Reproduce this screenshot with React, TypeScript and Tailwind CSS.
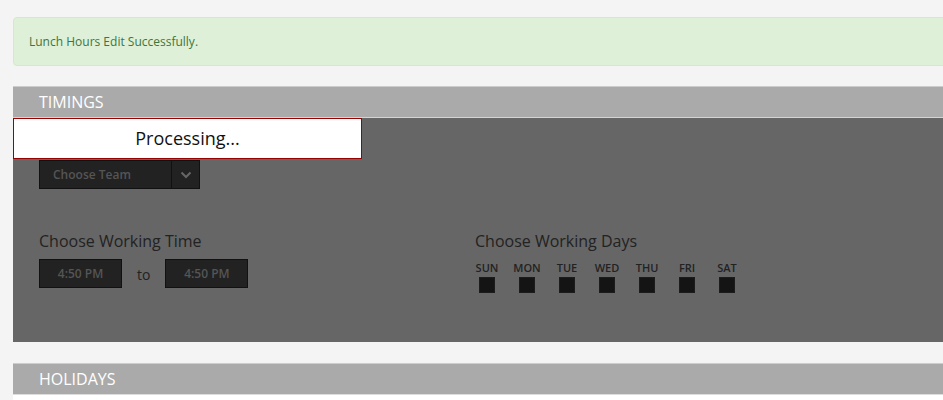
import React from "react";

const days = ["SUN", "MON", "TUE", "WED", "THU", "FRI", "SAT"];

function PanelHeader({ title }: { title: string }) {
  return (
    <div className="h-[31px] bg-[#aaaaaa] border-t border-[#cccccc] flex items-center pl-[26px] text-[16px] text-white">
      {title}
    </div>
  );
}

function TimeBox() {
  return (
    <div className="w-[83px] h-[29px] bg-[#222222] border border-[#111111] flex items-center justify-center text-[12px] font-semibold text-[#555555]">
      4:50 PM
    </div>
  );
}

export default function App() {
  return (
    <div
      className="min-h-[400px] bg-[#f4f4f4] pt-[17px] pl-[13px] overflow-hidden"
      style={{ fontFamily: '"Open Sans", "DejaVu Sans", sans-serif' }}
    >
      <div className="w-[960px]">
        {/* alert */}
        <div className="h-[49px] bg-[#dff0d8] border border-[#d6e9c6] rounded-[4px] flex items-center pl-[15px] text-[12px] text-[#3c763d]">
          Lunch Hours Edit Successfully.
        </div>

        {/* timings panel */}
        <div className="mt-[20px]">
          <PanelHeader title="TIMINGS" />
          <div className="relative h-[225px] bg-[#666666] border-t border-[#d4d4d4] pt-[42px] pl-[26px]">
            <div className="w-[161px] h-[29px] bg-[#222222] border border-[#111111] flex">
              <div className="flex-1 flex items-center pl-[13px] text-[12px] font-semibold text-[#555555]">
                Choose Team
              </div>
              <div className="w-[28px] border-l border-[#111111] flex items-center justify-center">
                <svg width="12" height="8" viewBox="0 0 12 8" fill="none">
                  <path d="M1.5 1.5 L6 6 L10.5 1.5" stroke="#666666" strokeWidth="2" />
                </svg>
              </div>
            </div>

            <div className="flex mt-[41px]">
              <div className="w-[436px]">
                <div className="text-[16px] leading-[22px] text-[#222222]">Choose Working Time</div>
                <div className="flex items-center mt-[7px]">
                  <TimeBox />
                  <span className="mx-[15px] text-[14px] text-[#222222] mt-[2px]">to</span>
                  <TimeBox />
                </div>
              </div>
              <div>
                <div className="text-[16px] leading-[22px] text-[#222222]">Choose Working Days</div>
                <div className="flex gap-[16px] mt-[9px]">
                  {days.map((d) => (
                    <div key={d} className="w-[24px] flex flex-col items-center">
                      <span className="text-[11px] leading-[14px] font-semibold text-[#222222] whitespace-nowrap">
                        {d}
                      </span>
                      <div className="w-[16px] h-[16px] mt-[2px] bg-[#141414] border border-[#1c1c1c]" />
                    </div>
                  ))}
                </div>
              </div>
            </div>

            {/* processing overlay */}
            <div className="absolute top-0 left-0 w-[349px] h-[41px] bg-white border border-[#990000] flex items-center justify-center text-[18px] text-[#111111]">
              Processing...
            </div>
          </div>
        </div>

        {/* holidays panel */}
        <div className="mt-[21px]">
          <PanelHeader title="HOLIDAYS" />
          <div className="h-[20px] bg-white border-t border-[#dddddd]" />
        </div>
      </div>
    </div>
  );
}
